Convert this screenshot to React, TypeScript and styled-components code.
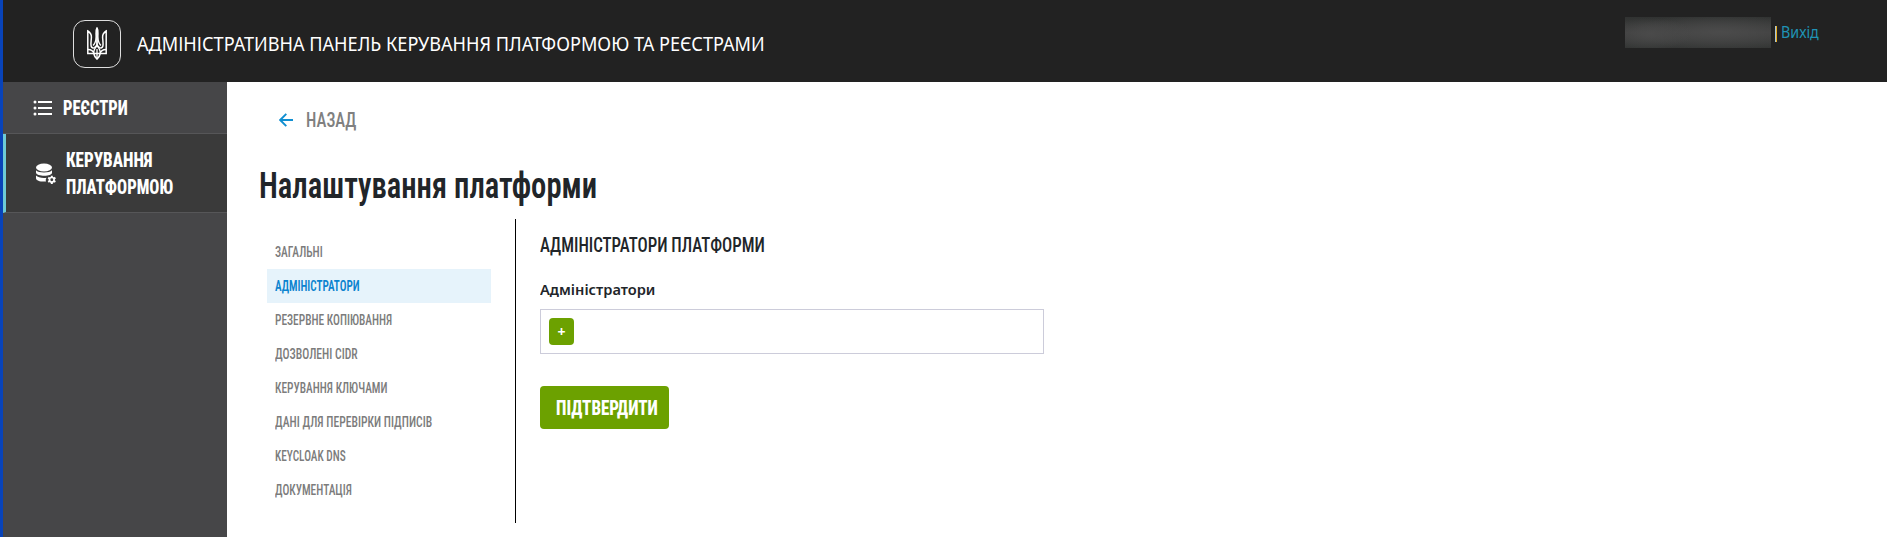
import React, { useLayoutEffect, useRef, useState } from 'react';
import styled, { createGlobalStyle } from 'styled-components';

const GlobalStyle = createGlobalStyle`
  * { box-sizing: border-box; }
  body { margin: 0; background: #fff; font-family: 'Noto Sans', sans-serif; color: #212529; }
`;

const Page = styled.div`
  display: flex;
  flex-direction: column;
  height: 537px;
  border-left: 3px solid #0843b9;
  overflow: hidden;
`;

const Header = styled.header`
  display: flex;
  flex: 0 0 82px;
  background: #222;
  color: #fff;
  padding-left: 70px;
`;

const Logo = styled.svg`
  margin-top: 20px;
  width: 48px;
  height: 48px;
`;

const HeaderTitle = styled.div`
  margin: 30px 0 0 16px;
  font-size: 19.2px;
  line-height: 27px;
`;

const Account = styled.div`
  display: flex;
  align-items: flex-start;
  margin-left: auto;
  padding: 17px 68px 0 0;
`;

const HiddenName = styled.div`
  width: 146px;
  height: 31px;
  background:
    radial-gradient(ellipse 42px 16px at 25px 17px, #4a4a4a, transparent),
    radial-gradient(ellipse 90px 18px at 95px 15px, #4b4b4b, transparent),
    linear-gradient(#303231, #414141 50%, #343635);
`;

const Bar = styled.span`
  width: 2px;
  height: 16px;
  margin: 9px 4px 0;
  background: linear-gradient(90deg, #a9c5d8 50%, #e5ab20 50%);
`;

const Logout = styled.a`
  color: #1f93b5;
  font-size: 15.4px;
  line-height: 20px;
  margin-top: 6px;
`;

const Body = styled.div`
  display: flex;
  flex: 1;
`;

const Sidebar = styled.nav`
  flex: none;
  width: 224px;
  background: #464648;
`;

const NavItem = styled.a<{ $active?: boolean }>`
  display: flex;
  align-items: center;
  height: ${p => (p.$active ? 79 : 52)}px;
  padding-left: ${p => (p.$active ? 29 : 30)}px;
  gap: ${p => (p.$active ? 10 : 11)}px;
  color: #fff;
  font-size: 20.5px;
  font-weight: 800;
  line-height: 27px;
  border-bottom: 1px solid #565658;
  ${p => p.$active && 'background: #3a3a3a; border-left: 3px solid #6dcbd7;'}
`;

const NavLines = styled.span`
  display: flex;
  flex-direction: column;
  padding-top: 1px;
`;

const Content = styled.main`
  padding-left: 32px;
`;

const Back = styled.a`
  display: flex;
  align-items: center;
  gap: 13px;
  margin-top: 24px;
  height: 28px;
  padding-left: 20px;
  color: #808080;
  font-size: 20.5px;
  font-weight: 500;
`;

const Title = styled.h1`
  margin: 28px 0 0;
  font-size: 36px;
  line-height: 48px;
  font-weight: 560;
`;

const Columns = styled.div`
  display: flex;
  margin-top: 9px;
`;

const Tabs = styled.div`
  flex: none;
  width: 257px;
  height: 304px;
  padding: 16px 24px 0 8px;
  border-right: 1px solid #000;
`;

const Tab = styled.a<{ $active?: boolean }>`
  display: block;
  height: 34px;
  padding: 9px 0 0 8px;
  font-size: 13.8px;
  line-height: 16px;
  font-weight: ${p => (p.$active ? 600 : 500)};
  color: ${p => (p.$active ? '#0b83cf' : '#7c7c7c')};
  background: ${p => (p.$active ? '#e6f3fb' : 'transparent')};
`;

const Form = styled.form`
  display: flex;
  flex-direction: column;
  align-items: flex-start;
  padding-left: 24px;
`;

const FormTitle = styled.h2`
  margin: 12px 0 0;
  font-size: 20.5px;
  line-height: 28px;
  font-weight: 550;
`;

const Label = styled.label`
  margin-top: 20px;
  font-size: 15px;
  line-height: 20px;
  font-weight: 650;
`;

const AdminBox = styled.div`
  display: flex;
  width: 504px;
  height: 45px;
  margin-top: 10px;
  padding: 8px;
  border: 1px solid #ccccda;
`;

const AddButton = styled.button`
  display: flex;
  align-items: center;
  justify-content: center;
  width: 25px;
  height: 27px;
  padding: 0;
  border: 0;
  border-radius: 4px;
  background: #6ca100;
  color: #fff;
  font: 700 14px 'Noto Sans', sans-serif;
`;

const Submit = styled.button`
  display: flex;
  align-items: center;
  width: 129px;
  height: 43px;
  margin-top: 32px;
  padding: 0 0 0 16px;
  border: 0;
  border-radius: 4px;
  background: #6ca100;
  color: #fff;
  font: 800 20.5px Roboto, sans-serif;
`;

const FitBox = styled.span<{ $narrow?: boolean }>`
  display: block;
  white-space: nowrap;
  ${p => p.$narrow && "font-family: Roboto, sans-serif; font-stretch: 75%;"}
`;

const FitInner = styled.span`
  display: inline-block;
  transform-origin: 0 50%;
`;

/* Sets a line of text to a given width by narrowing its letterforms. */
function Fit({ width, narrow = true, children }: { width: number; narrow?: boolean; children: string }) {
  const ref = useRef<HTMLSpanElement>(null);
  const [scale, setScale] = useState(1);
  useLayoutEffect(() => {
    if (ref.current) setScale(width / ref.current.offsetWidth);
  }, [width]);
  return (
    <FitBox $narrow={narrow} style={{ width }}>
      <FitInner ref={ref} style={{ transform: `scaleX(${scale})` }}>{children}</FitInner>
    </FitBox>
  );
}

const tabs: [string, number][] = [
  ['ЗАГАЛЬНІ', 47.5],
  ['АДМІНІСТРАТОРИ', 85],
  ['РЕЗЕРВНЕ КОПІЮВАННЯ', 117.5],
  ['ДОЗВОЛЕНІ CIDR', 83],
  ['КЕРУВАННЯ КЛЮЧАМИ', 112.5],
  ['ДАНІ ДЛЯ ПЕРЕВІРКИ ПІДПИСІВ', 157.5],
  ['KEYCLOAK DNS', 70.5],
  ['ДОКУМЕНТАЦІЯ', 77],
];

const Trident = () => (
  <Logo viewBox="0 0 48 48" fill="none" stroke="#fff">
    <rect x=".5" y=".5" width="47" height="47" rx="11.5" strokeOpacity=".85" />
    <path d="M24 7.5c-1.7 3-.8 5.500-.9 9.500-.1 4-1 6.500-3 8.500M24 7.500c1.700 3 .8 5.500.9 9.500.1 4 1 6.500 3 8.500" strokeWidth="1.4" />
    <path d="M24 9v18" strokeWidth="1.800" />
    <path d="M14.800 11v22.500h6c.5 2.800 1.500 4.400 3.200 5.500 1.700-1.100 2.700-2.700 3.200-5.500h6V11c-2.600 1.600-3.800 4-3.600 6.500.2 3.500.8 6 .3 8.500-.4 1.800-2.200 2.500-3.600 1.500L24 25l-2.300 2.500c-1.400 1-3.200.3-3.600-1.500-.5-2.500.1-5 .3-8.500.2-2.500-1-4.900-3.600-6.500z" strokeWidth="1.500" />
    <path d="M15 29.500c3 .1 5.300 1.500 5.800 4h6.400c.5-2.500 2.800-3.900 5.800-4M24 26c-2.300 2-3.400 4.500-3.200 7.500M24 26c2.300 2 3.400 4.500 3.200 7.500M24 29v10" strokeWidth="1.300" />
  </Logo>
);

const ListIcon = () => (
  <svg width="19" height="16" viewBox="0 0 19 16" fill="#fff">
    <path d="M5 1h14v2H5zM5 7h14v2H5zM5 13h14v2H5z" />
    <circle cx="2" cy="2" r="1.500" /><circle cx="2" cy="8" r="1.500" /><circle cx="2" cy="14" r="1.500" />
  </svg>
);

const DatabaseIcon = () => (
  <svg width="21" height="21" viewBox="0 0 21 21" fill="#fff">
    <ellipse cx="9" cy="4.500" rx="8" ry="4" />
    <path d="M1 7.300c2 2.900 14 2.900 16 0v2.500c0 1-1 1.700-2.300 2.200-4 1.500-13.700.8-13.700-2.500zM1 12.600c1.800 2 6.500 2.800 10.500 2.200-.8 1.200-.9 2.300-.5 3.700C6.500 19 1 18 1 15.200z" />
    <circle cx="16.800" cy="16.800" r="2.300" fill="none" stroke="#fff" strokeWidth="1.700" />
    <path d="M16.800 12.700v1.700M16.800 19.200v1.700M13.200 14.700l1.500.9M18.900 18l1.500.9M13.200 18.900l1.500-.9M18.900 15.600l1.500-.9" stroke="#fff" strokeWidth="2" />
  </svg>
);

const BackIcon = () => (
  <svg width="14" height="14" viewBox="0 0 14 14" fill="none" stroke="#118fd1" strokeWidth="1.900">
    <path d="M14 7H1.500M7.300.8 1.200 7l6.100 6.200" />
  </svg>
);

export default function App() {
  return (
    <Page>
      <GlobalStyle />
      <Header>
        <Trident />
        <HeaderTitle>
          <Fit width={628} narrow={false}>АДМІНІСТРАТИВНА ПАНЕЛЬ КЕРУВАННЯ ПЛАТФОРМОЮ ТА РЕЄСТРАМИ</Fit>
        </HeaderTitle>
        <Account>
          <HiddenName />
          <Bar />
          <Logout><Fit width={38} narrow={false}>Вихід</Fit></Logout>
        </Account>
      </Header>
      <Body>
        <Sidebar>
          <NavItem>
            <ListIcon />
            <NavLines>
              <Fit width={64.5}>РЕЄСТРИ</Fit>
            </NavLines>
          </NavItem>
          <NavItem $active>
            <DatabaseIcon />
            <NavLines>
              <Fit width={86.5}>КЕРУВАННЯ</Fit>
              <Fit width={107.5}>ПЛАТФОРМОЮ</Fit>
            </NavLines>
          </NavItem>
        </Sidebar>
        <Content>
          <Back>
            <BackIcon />
            <Fit width={50}>НАЗАД</Fit>
          </Back>
          <Title><Fit width={338.5}>Налаштування платформи</Fit></Title>
          <Columns>
            <Tabs>
              {tabs.map(([name, width], i) => (
                <Tab key={name} $active={i === 1}><Fit width={width}>{name}</Fit></Tab>
              ))}
            </Tabs>
            <Form>
              <FormTitle><Fit width={225}>АДМІНІСТРАТОРИ ПЛАТФОРМИ</Fit></FormTitle>
              <Label><Fit width={115} narrow={false}>Адміністратори</Fit></Label>
              <AdminBox><AddButton type="button">+</AddButton></AdminBox>
              <Submit type="button"><Fit width={102}>ПІДТВЕРДИТИ</Fit></Submit>
            </Form>
          </Columns>
        </Content>
      </Body>
    </Page>
  );
}
